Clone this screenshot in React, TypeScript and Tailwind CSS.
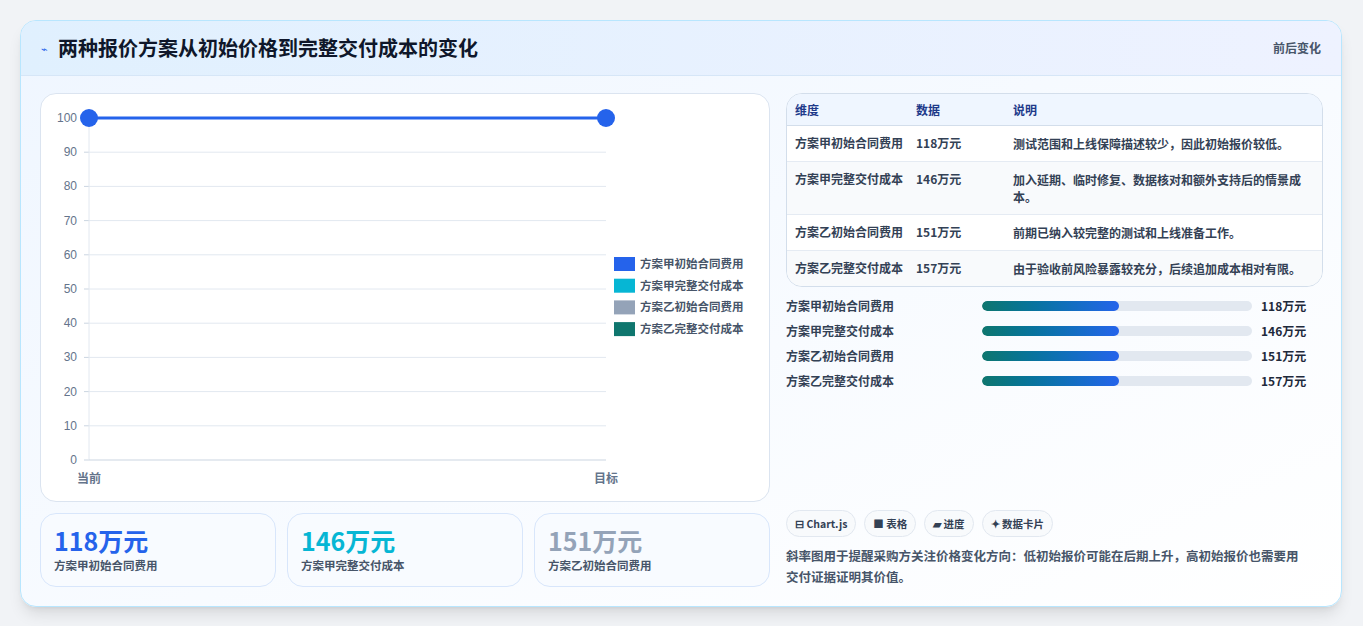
import React from "react";

const font = { fontFamily: '"Noto Sans CJK SC", "Noto Sans", sans-serif' };

function Chart() {
  const ticks = [0, 10, 20, 30, 40, 50, 60, 70, 80, 90, 100];
  const y = (v: number) => 366 - v * 3.42;
  const legend = [
    ["#2563eb", "方案甲初始合同费用"],
    ["#06b6d4", "方案甲完整交付成本"],
    ["#94a3b8", "方案乙初始合同费用"],
    ["#0f766e", "方案乙完整交付成本"],
  ];
  return (
    <svg width="729" height="407" className="block">
      {ticks.map((t) => (
        <g key={t}>
          {t > 0 && t < 100 && <line x1="48" x2="565" y1={y(t)} y2={y(t)} stroke="#e2e8f0" />}
          <line x1="43" x2="48" y1={y(t)} y2={y(t)} stroke="#cbd5e1" />
          <text x="36" y={y(t) + 4} textAnchor="end" fontSize="12" fill="#64748b" fontFamily="Liberation Sans, sans-serif">{t}</text>
        </g>
      ))}
      <line x1="48" x2="48" y1={y(100)} y2={y(0)} stroke="#e2e8f0" />
      <line x1="48" x2="565" y1={y(0)} y2={y(0)} stroke="#cbd5e1" />
      <text x="48" y="389" textAnchor="middle" fontSize="12" fill="#64748b" fontWeight="600">当前</text>
      <text x="565" y="389" textAnchor="middle" fontSize="12" fill="#64748b" fontWeight="600">目标</text>
      <line x1="48" x2="565" y1={y(100)} y2={y(100)} stroke="#2563eb" strokeWidth="3" />
      <circle cx="48" cy={y(100)} r="9" fill="#2563eb" />
      <circle cx="565" cy={y(100)} r="9" fill="#2563eb" />
      {legend.map(([c, l], i) => (
        <g key={l}>
          <rect x="573" y={163 + i * 21.7} width="21" height="14" fill={c} />
          <text x="599" y={174 + i * 21.7} fontSize="11.5" fill="#475569" fontWeight="600">{l}</text>
        </g>
      ))}
    </svg>
  );
}

export default function App() {
  const rows = [
    ["方案甲初始合同费用", "118万元", "测试范围和上线保障描述较少，因此初始报价较低。"],
    ["方案甲完整交付成本", "146万元", "加入延期、临时修复、数据核对和额外支持后的情景成本。"],
    ["方案乙初始合同费用", "151万元", "前期已纳入较完整的测试和上线准备工作。"],
    ["方案乙完整交付成本", "157万元", "由于验收前风险暴露较充分，后续追加成本相对有限。"],
  ];
  const stats = [
    ["118万元", "text-[#2563eb]", "方案甲初始合同费用"],
    ["146万元", "text-[#06b6d4]", "方案甲完整交付成本"],
    ["151万元", "text-[#94a3b8]", "方案乙初始合同费用"],
  ];
  return (
    <div className="min-h-[626px] bg-[#f1f3f6] pt-5 pl-5 pr-[21px] pb-5" style={font}>
      <div className="rounded-2xl border border-sky-200 bg-gradient-to-br from-[#eff6ff] to-white shadow-lg overflow-hidden">
        <div className="h-[55px] flex items-center justify-between pl-5 pr-5 bg-gradient-to-r from-[#e0f0fe] to-[#eef2ff] border-b border-[#d6e6f7]">
          <div className="flex items-center gap-2.5">
            <span className="text-[11px] text-[#2563eb]">⌁</span>
            <span className="text-[20px] font-bold text-[#0f172a]">两种报价方案从初始价格到完整交付成本的变化</span>
          </div>
          <span className="text-[12px] font-semibold text-[#475569]">前后变化</span>
        </div>
        <div className="flex gap-4 pl-[19px] pr-[18px] pt-[17px] pb-[19px]">
          <div className="w-[730px] flex flex-col gap-[11px]">
            <div className="h-[409px] rounded-2xl border border-[#dbe4f0] bg-white">
              <Chart />
            </div>
            <div className="grid grid-cols-3 gap-[11px]">
              {stats.map(([v, c, l]) => (
                <div key={l} className="h-[74px] rounded-2xl border border-[#d8e6fb] bg-[#f8fbff] px-[13px] pt-[9px]">
                  <div className={`text-[25px] font-bold leading-[34px] ${c}`}>{v}</div>
                  <div className="text-[11.5px] font-semibold text-[#475569]">{l}</div>
                </div>
              ))}
            </div>
          </div>
          <div className="flex-1 flex flex-col">
            <div className="rounded-2xl border border-[#d3deeb] bg-white overflow-hidden text-[12px] font-semibold text-[#334155]">
              <div className="flex h-[32px] items-center bg-[#eff6ff] border-b border-[#d3deeb] text-[#1e3a8a]">
                <div className="w-[129px] pl-2">维度</div>
                <div className="w-[97px]">数据</div>
                <div>说明</div>
              </div>
              {rows.map(([a, b, c], i) => (
                <div key={a} className={`flex items-start py-[9px] ${i % 2 ? "bg-[#f8fafc]" : "bg-white"} ${i < 3 ? "border-b border-[#e5ebf3]" : ""}`}>
                  <div className="w-[129px] pl-2 shrink-0 leading-[16px]">{a}</div>
                  <div className="w-[97px] shrink-0 leading-[16px]">{b}</div>
                  <div className="flex-1 pr-4 leading-[17px]">{c}</div>
                </div>
              ))}
            </div>
            <div className="flex flex-col gap-[9px] mt-[11px] text-[12px] font-semibold text-[#334155]">
              {rows.map(([a, b]) => (
                <div key={a} className="flex items-center h-[16px]">
                  <div className="w-[196px]">{a}</div>
                  <div className="w-[270px] h-[10px] rounded-full bg-[#e2e8f0] overflow-hidden">
                    <div className="h-full w-[137px] rounded-full bg-gradient-to-r from-[#0f766e] to-[#2563eb]" />
                  </div>
                  <div className="ml-[9px] font-bold text-[#1e293b]">{b}</div>
                </div>
              ))}
            </div>
            <div className="flex gap-2 mt-auto text-[10.5px] font-semibold text-[#334155]">
              {["⊟ Chart.js", "■ 表格", "▰ 进度", "✦ 数据卡片"].map((t) => (
                <span key={t} className="h-[27px] px-2 flex items-center rounded-full border border-[#e2e8f0] bg-[#f8fafc]">{t}</span>
              ))}
            </div>
            <p className="mt-[8px] pr-4 text-[12.5px] leading-[21px] font-semibold text-[#475569]">
              斜率图用于提醒采购方关注价格变化方向：低初始报价可能在后期上升，高初始报价也需要用交付证据证明其价值。
            </p>
          </div>
        </div>
      </div>
    </div>
  );
}
